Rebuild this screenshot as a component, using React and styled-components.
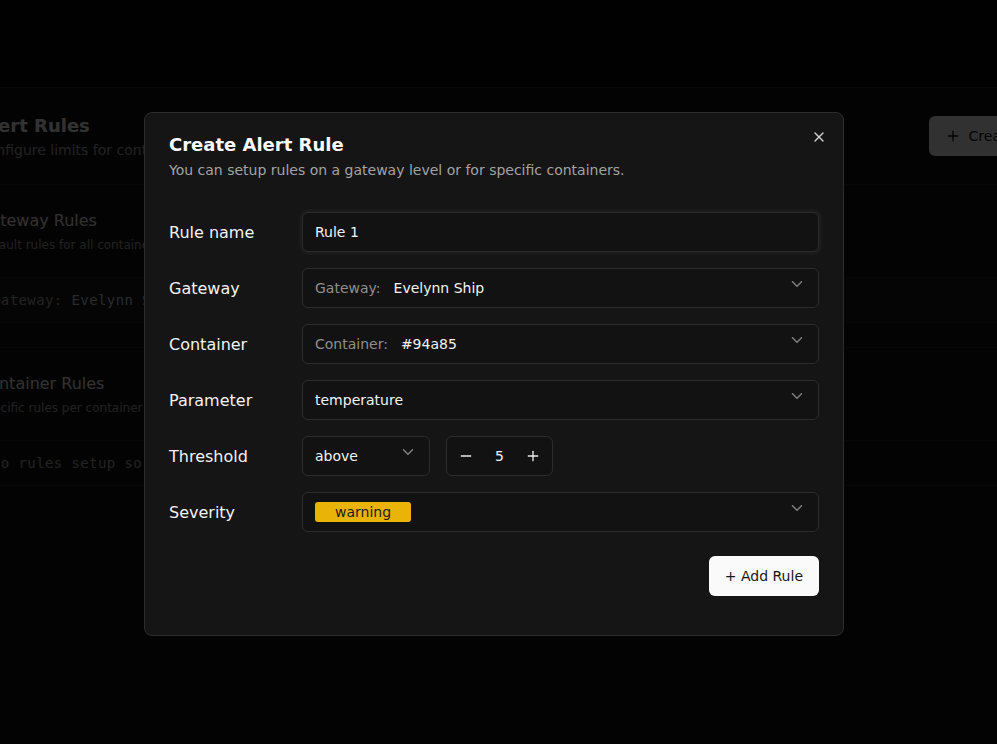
import React from 'react';
import styled, { createGlobalStyle } from 'styled-components';
import { ChevronDown, Minus, Plus, X } from 'lucide-react';

const GlobalStyle = createGlobalStyle`
  html, body {
    margin: 0;
    padding: 0;
    background: #000;
    overflow: hidden;
  }
  body {
    font-family: "DejaVu Sans", "Noto Sans", sans-serif;
    color: #fafafa;
  }
  * { box-sizing: border-box; }
`;

function App() {
  return (
    <>
      <GlobalStyle />
      <Page>
        <TopBar />
        <Main>
          <PageHeader>
            <div>
              <PageTitle>Alert Rules</PageTitle>
              <PageSubtitle>Configure limits for containers and gateways</PageSubtitle>
            </div>
            <CreateButton>
              <Plus size={16} />
              Create Rule
            </CreateButton>
          </PageHeader>

          <Section>
            <SectionHead>
              <SectionTitle>Gateway Rules</SectionTitle>
              <SectionText>Default rules for all containers on a gateway</SectionText>
            </SectionHead>
            <RuleRow $filled>
              <MonoLabel>Gateway:</MonoLabel>&nbsp;<MonoValue>Evelynn Ship</MonoValue>
            </RuleRow>
          </Section>

          <Section $last>
            <SectionHead>
              <SectionTitle>Container Rules</SectionTitle>
              <SectionText>Specific rules per container</SectionText>
            </SectionHead>
            <RuleRow>
              <MonoLabel>No rules setup so far.</MonoLabel>
            </RuleRow>
          </Section>
        </Main>
      </Page>

      <Overlay>
        <Dialog>
          <CloseButton>
            <X size={16} />
          </CloseButton>
          <DialogTitle>Create Alert Rule</DialogTitle>
          <DialogDescription>
            You can setup rules on a gateway level or for specific containers.
          </DialogDescription>

          <Form>
            <Label>Rule name</Label>
            <TextInput defaultValue="Rule 1" />

            <Label>Gateway</Label>
            <SelectTrigger>
              <SelectValue>
                <Hint>Gateway:</Hint>
                <span>Evelynn Ship</span>
              </SelectValue>
              <Chevron size={18} />
            </SelectTrigger>

            <Label>Container</Label>
            <SelectTrigger>
              <SelectValue>
                <Hint>Container:</Hint>
                <span>#94a85</span>
              </SelectValue>
              <Chevron size={18} />
            </SelectTrigger>

            <Label>Parameter</Label>
            <SelectTrigger>
              <SelectValue>temperature</SelectValue>
              <Chevron size={18} />
            </SelectTrigger>

            <Label>Threshold</Label>
            <ThresholdRow>
              <SelectTrigger $width="128px">
                <SelectValue>above</SelectValue>
                <Chevron size={18} />
              </SelectTrigger>
              <Stepper>
                <StepButton><Minus size={16} /></StepButton>
                <StepValue>5</StepValue>
                <StepButton><Plus size={16} /></StepButton>
              </Stepper>
            </ThresholdRow>

            <Label>Severity</Label>
            <SelectTrigger>
              <Badge>warning</Badge>
              <Chevron size={18} />
            </SelectTrigger>
          </Form>

          <Footer>
            <AddButton>+ Add Rule</AddButton>
          </Footer>
        </Dialog>
      </Overlay>
    </>
  );
}

export default App;

const Page = styled.div`
  min-height: 100vh;
  background: #131313;
`;

const TopBar = styled.div`
  height: 88px;
  background: #050505;
  border-bottom: 1px solid #262626;
`;

const Main = styled.div`
  margin-left: -46px;
  width: 1136px;
`;

const PageHeader = styled.div`
  display: flex;
  justify-content: space-between;
  align-items: center;
  padding: 24px;
  border-bottom: 1px solid #262626;
`;

const PageTitle = styled.h1`
  margin: 0;
  font-size: 18px;
  line-height: 28px;
  font-weight: 700;
  color: #fafafa;
`;

const PageSubtitle = styled.p`
  margin: 0;
  font-size: 14px;
  line-height: 20px;
  color: #a3a3a3;
`;

const CreateButton = styled.div`
  display: flex;
  align-items: center;
  gap: 8px;
  height: 40px;
  padding: 0 16px;
  border-radius: 6px;
  background: #f5f5f5;
  color: #171717;
  font-size: 14px;
`;

const Section = styled.div`
  padding-bottom: 24px;
  border-bottom: ${(p) => (p.$last ? 'none' : '1px solid #262626')};
`;

const SectionHead = styled.div`
  padding: 24px;
`;

const SectionTitle = styled.div`
  font-size: 16px;
  line-height: 24px;
  color: #f0f0f0;
`;

const SectionText = styled.div`
  margin-top: 4px;
  font-size: 12px;
  line-height: 16px;
  color: #a3a3a3;
`;

const RuleRow = styled.div`
  display: flex;
  align-items: center;
  height: 46px;
  padding: 0 38px;
  border-top: 1px solid #262626;
  border-bottom: 1px solid #262626;
  background: ${(p) => (p.$filled ? '#1b1b1b' : 'transparent')};
  font-family: "DejaVu Sans Mono", "Liberation Mono", monospace;
  font-size: 14px;
  letter-spacing: 0.4px;
`;

const MonoLabel = styled.span`
  color: #a8a8a8;
`;

const MonoValue = styled.span`
  color: #c9d1dc;
`;

const Overlay = styled.div`
  position: fixed;
  inset: 0;
  background: rgba(0, 0, 0, 0.8);
  display: flex;
  align-items: center;
  justify-content: center;
`;

const Dialog = styled.div`
  position: relative;
  width: 700px;
  margin: 4px 9px 0 0;
  padding: 23px 24px 39px;
  background: #151515;
  border: 1px solid #2c2c2c;
  border-radius: 8px;
`;

const CloseButton = styled.div`
  position: absolute;
  top: 16px;
  right: 16px;
  width: 16px;
  height: 16px;
  color: #cfcfcf;
  display: flex;
`;

const DialogTitle = styled.h2`
  margin: 0;
  font-size: 18px;
  line-height: 18px;
  font-weight: 700;
  color: #fafafa;
`;

const DialogDescription = styled.p`
  margin: 6px 0 0;
  font-size: 14px;
  line-height: 20px;
  color: #a3a3a3;
`;

const Form = styled.div`
  display: grid;
  grid-template-columns: 133px 1fr;
  row-gap: 16px;
  align-items: center;
  margin-top: 32px;
`;

const Label = styled.div`
  font-size: 16px;
  color: #f2f2f2;
`;

const TextInput = styled.input`
  height: 40px;
  width: 100%;
  padding: 0 12px;
  background: #121212;
  border: 1px solid #2c2c2c;
  border-radius: 6px;
  color: #f2f2f2;
  font-family: inherit;
  font-size: 14px;
  outline: none;
  box-shadow: 0 0 0 3px #1b1b1b;
`;

const SelectTrigger = styled.div`
  display: flex;
  align-items: center;
  justify-content: space-between;
  height: 40px;
  width: ${(p) => p.$width || '100%'};
  padding: 0 12px;
  background: #121212;
  border: 1px solid #2c2c2c;
  border-radius: 6px;
  font-size: 14px;
  color: #f2f2f2;
`;

const SelectValue = styled.div`
  display: flex;
  align-items: center;
  gap: 13px;
`;

const Hint = styled.span`
  color: #8f8f8f;
`;

const Chevron = styled(ChevronDown)`
  flex-shrink: 0;
  color: #9a9a9a;
  opacity: 0.8;
  margin-bottom: 8px;
`;

const ThresholdRow = styled.div`
  display: flex;
  gap: 16px;
`;

const Stepper = styled.div`
  display: flex;
  align-items: center;
  height: 40px;
  padding: 0 4px;
  background: #121212;
  border: 1px solid #2c2c2c;
  border-radius: 6px;
`;

const StepButton = styled.div`
  display: flex;
  align-items: center;
  justify-content: center;
  width: 30px;
  height: 30px;
  color: #ececec;
`;

const StepValue = styled.div`
  width: 37px;
  text-align: center;
  font-size: 14px;
  color: #f2f2f2;
`;

const Badge = styled.span`
  display: inline-block;
  height: 20px;
  line-height: 20px;
  padding: 0 20px;
  border-radius: 3px;
  background: #eab308;
  color: #1c1c1c;
  font-size: 14px;
`;

const Footer = styled.div`
  display: flex;
  justify-content: flex-end;
  margin-top: 24px;
`;

const AddButton = styled.div`
  display: flex;
  align-items: center;
  height: 40px;
  padding: 0 16px;
  border-radius: 6px;
  background: #fafafa;
  color: #171717;
  font-size: 14px;
`;
